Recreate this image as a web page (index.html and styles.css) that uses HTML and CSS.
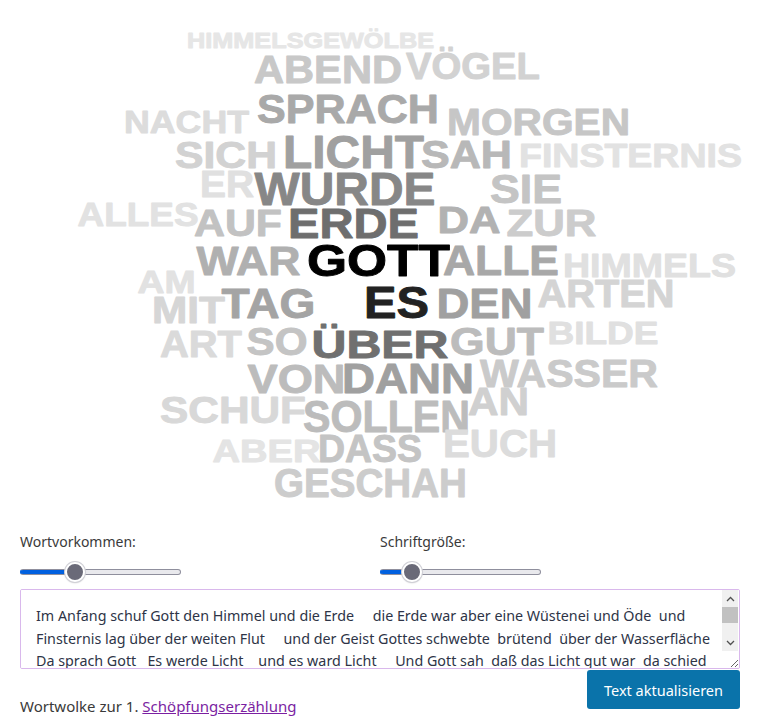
FILE: index.html
```html
<!DOCTYPE html>
<html lang="de">
<head>
<meta charset="utf-8">
<title>Wortwolke</title>
<link rel="stylesheet" href="styles.css">
</head>
<body>
<div class="page">
  <svg class="cloud" width="765" height="532" viewBox="0 0 765 532" xmlns="http://www.w3.org/2000/svg">
    <g class="words">
      <text x="187" y="48" font-size="21.5" textLength="247" lengthAdjust="spacingAndGlyphs" color="#e6e6e6">HIMMELSGEWÖLBE</text>
      <text x="254" y="83" font-size="38" textLength="148" lengthAdjust="spacingAndGlyphs" color="#c8c8c8">ABEND</text>
      <text x="406" y="79" font-size="36" textLength="134" lengthAdjust="spacingAndGlyphs" color="#d2d2d2">VÖGEL</text>
      <text x="124" y="132.5" font-size="32" textLength="125" lengthAdjust="spacingAndGlyphs" color="#dcdcdc">NACHT</text>
      <text x="257" y="123" font-size="41.5" textLength="182" lengthAdjust="spacingAndGlyphs" color="#a9a9a9">SPRACH</text>
      <text x="447" y="134.5" font-size="37" textLength="183" lengthAdjust="spacingAndGlyphs" color="#c6c6c6">MORGEN</text>
      <text x="175" y="168" font-size="36" textLength="102" lengthAdjust="spacingAndGlyphs" color="#d2d2d2">SICH</text>
      <text x="283" y="168" font-size="46" textLength="141" lengthAdjust="spacingAndGlyphs" color="#a0a0a0">LICHT</text>
      <text x="421" y="168" font-size="39" textLength="91" lengthAdjust="spacingAndGlyphs" color="#b8b8b8">SAH</text>
      <text x="519" y="166.5" font-size="33" textLength="223" lengthAdjust="spacingAndGlyphs" color="#e2e2e2">FINSTERNIS</text>
      <text x="200" y="196.7" font-size="36" textLength="54" lengthAdjust="spacingAndGlyphs" color="#e0e0e0">ER</text>
      <text x="254.5" y="205" font-size="47" textLength="181" lengthAdjust="spacingAndGlyphs" color="#878787">WURDE</text>
      <text x="490" y="203" font-size="40" textLength="72" lengthAdjust="spacingAndGlyphs" color="#c4c4c4">SIE</text>
      <text x="77.5" y="226" font-size="33" textLength="121" lengthAdjust="spacingAndGlyphs" color="#e2e2e2">ALLES</text>
      <text x="194" y="236" font-size="37" textLength="88" lengthAdjust="spacingAndGlyphs" color="#c2c2c2">AUF</text>
      <text x="288" y="238" font-size="43" textLength="131" lengthAdjust="spacingAndGlyphs" color="#6e6e6e">ERDE</text>
      <text x="437.5" y="232.5" font-size="37" textLength="63" lengthAdjust="spacingAndGlyphs" color="#b2b2b2">DA</text>
      <text x="506.5" y="236" font-size="37" textLength="90" lengthAdjust="spacingAndGlyphs" color="#cccccc">ZUR</text>
      <text x="196.5" y="275" font-size="40" textLength="104" lengthAdjust="spacingAndGlyphs" color="#b0b0b0">WAR</text>
      <text x="307" y="276" font-size="45" textLength="143" lengthAdjust="spacingAndGlyphs" color="#000000">GOTT</text>
      <text x="443" y="275" font-size="43" textLength="116" lengthAdjust="spacingAndGlyphs" color="#a8a8a8">ALLE</text>
      <text x="563" y="276.5" font-size="33" textLength="173" lengthAdjust="spacingAndGlyphs" color="#e0e0e0">HIMMELS</text>
      <text x="137.5" y="293.3" font-size="31" textLength="58" lengthAdjust="spacingAndGlyphs" color="#e2e2e2">AM</text>
      <text x="152" y="323.3" font-size="36" textLength="73" lengthAdjust="spacingAndGlyphs" color="#d6d6d6">MIT</text>
      <text x="221.5" y="318" font-size="43" textLength="94" lengthAdjust="spacingAndGlyphs" color="#a4a4a4">TAG</text>
      <text x="364" y="318" font-size="44" textLength="65" lengthAdjust="spacingAndGlyphs" color="#222222">ES</text>
      <text x="436.5" y="318.3" font-size="43" textLength="96" lengthAdjust="spacingAndGlyphs" color="#a0a0a0">DEN</text>
      <text x="537.5" y="306.7" font-size="38" textLength="137" lengthAdjust="spacingAndGlyphs" color="#d4d4d4">ARTEN</text>
      <text x="160" y="356.7" font-size="36" textLength="82" lengthAdjust="spacingAndGlyphs" color="#dadada">ART</text>
      <text x="246.5" y="354.5" font-size="39" textLength="61" lengthAdjust="spacingAndGlyphs" color="#c4c4c4">SO</text>
      <text x="311.5" y="358" font-size="38" textLength="137" lengthAdjust="spacingAndGlyphs" color="#707070">ÜBER</text>
      <text x="450" y="354.5" font-size="39" textLength="94" lengthAdjust="spacingAndGlyphs" color="#bcbcbc">GUT</text>
      <text x="547.5" y="344" font-size="32" textLength="111" lengthAdjust="spacingAndGlyphs" color="#e0e0e0">BILDE</text>
      <text x="247.5" y="393" font-size="40" textLength="98" lengthAdjust="spacingAndGlyphs" color="#bcbcbc">VON</text>
      <text x="342" y="393.3" font-size="43" textLength="132" lengthAdjust="spacingAndGlyphs" color="#a0a0a0">DANN</text>
      <text x="480" y="387" font-size="38.5" textLength="178" lengthAdjust="spacingAndGlyphs" color="#cacaca">WASSER</text>
      <text x="160" y="423" font-size="37" textLength="146" lengthAdjust="spacingAndGlyphs" color="#d8d8d8">SCHUF</text>
      <text x="303" y="431.5" font-size="44" textLength="167" lengthAdjust="spacingAndGlyphs" color="#bcbcbc">SOLLEN</text>
      <text x="468" y="415" font-size="38" textLength="61" lengthAdjust="spacingAndGlyphs" color="#d0d0d0">AN</text>
      <text x="212.5" y="461.7" font-size="31" textLength="108" lengthAdjust="spacingAndGlyphs" color="#e4e4e4">ABER</text>
      <text x="318" y="461.5" font-size="38" textLength="104" lengthAdjust="spacingAndGlyphs" color="#c4c4c4">DASS</text>
      <text x="443" y="456.5" font-size="38" textLength="114" lengthAdjust="spacingAndGlyphs" color="#dcdcdc">EUCH</text>
      <text x="274" y="496.5" font-size="40" textLength="193" lengthAdjust="spacingAndGlyphs" color="#cccccc">GESCHAH</text>
    </g>
  </svg>

  <div class="controls">
    <div class="control">
      <label class="control-label" for="freq">Wortvorkommen:</label>
      <input class="slider slider-freq" id="freq" type="range" min="0" max="100" value="32">
    </div>
    <div class="control">
      <label class="control-label" for="size">Schriftgröße:</label>
      <input class="slider slider-size" id="size" type="range" min="0" max="100" value="15">
    </div>
  </div>

  <div class="editor">
    <textarea class="source" spellcheck="false">Im Anfang schuf Gott den Himmel und die Erde     die Erde war aber eine Wüstenei und Öde  und
Finsternis lag über der weiten Flut     und der Geist Gottes schwebte  brütend  über der Wasserfläche
Da sprach Gott   Es werde Licht    und es ward Licht     Und Gott sah  daß das Licht gut war  da schied
Gott zwischen dem Licht und der Finsternis  Und Gott nannte das Licht Tag  und die Finsternis nannte er Nacht  Und es ward Abend  und es ward Morgen  erster Tag  Und Gott sprach  Es werde eine feste Wölbung inmitten der Wasser  die bilde eine Scheide zwischen den Wassern  Und so geschah es</textarea>
    <div class="scrollbar" aria-hidden="true">
      <div class="sb-btn">
        <svg width="9" height="6" viewBox="0 0 9 6"><path d="M1 5l3.5-3.5L8 5" fill="none" stroke="#505050" stroke-width="1.3"/></svg>
      </div>
      <div class="sb-track"><div class="sb-thumb"></div></div>
      <div class="sb-btn">
        <svg width="9" height="6" viewBox="0 0 9 6"><path d="M1 1l3.5 3.5L8 1" fill="none" stroke="#505050" stroke-width="1.3"/></svg>
      </div>
    </div>
  </div>

  <div class="footer">
    <p class="caption">Wortwolke zur 1. <a class="caption-link" href="#">Schöpfungserzählung</a></p>
    <button class="update-btn" type="button">Text aktualisieren</button>
  </div>
</div>
</body>
</html>
```

FILE: styles.css
```css
html, body {
  margin: 0;
  padding: 0;
  background: #ffffff;
}

body {
  font-family: "Noto Sans", "Open Sans", sans-serif;
  color: #3a3a3a;
}

.page {
  width: 765px;
}

.cloud {
  display: block;
}

.cloud text {
  font-family: "Liberation Sans", Arial, sans-serif;
  font-weight: bold;
  fill: currentColor;
  stroke: currentColor;
  stroke-width: 0.9px;
  stroke-linejoin: round;
}

.controls {
  display: grid;
  grid-template-columns: 360px 360px;
  padding: 0 20px;
}

.control {
  display: flex;
  flex-direction: column;
  align-items: flex-start;
}

.control-label {
  font-size: 14px;
  line-height: 20px;
  color: #3a3a3a;
}

.slider {
  -webkit-appearance: none;
  appearance: none;
  width: 161px;
  height: 20px;
  margin: 10px 0 0 0;
  padding: 0;
  background: transparent;
}

.slider::-webkit-slider-runnable-track {
  height: 6px;
  border-radius: 3px;
  border: 1px solid #8f8f9d;
  box-sizing: border-box;
}

.slider-freq::-webkit-slider-runnable-track {
  background: linear-gradient(to right, #0060df 0, #0060df 52px, #e9e9ed 52px);
  border-left-color: #0060df;
}

.slider-size::-webkit-slider-runnable-track {
  background: linear-gradient(to right, #0060df 0, #0060df 26px, #e9e9ed 26px);
  border-left-color: #0060df;
}

.slider::-webkit-slider-thumb {
  -webkit-appearance: none;
  appearance: none;
  width: 20px;
  height: 20px;
  margin-top: -8px;
  border-radius: 50%;
  background: #6a6a78;
  border: 2px solid #ffffff;
  box-shadow: 0 0 0 1px #d0d0d6, 0 1px 2px rgba(0,0,0,0.2);
  box-sizing: border-box;
}

.editor {
  position: relative;
  width: 720px;
  margin: 7px 20px 0 20px;
}

.source {
  display: block;
  box-sizing: border-box;
  width: 720px;
  height: 80px;
  margin: 0;
  padding: 15px 2px 0 15px;
  border: 1px solid #d9b8ec;
  border-radius: 2px;
  font-family: "Noto Sans", "Open Sans", sans-serif;
  font-size: 14.3px;
  line-height: 22.7px;
  color: #2e3447;
  resize: vertical;
  overflow-y: scroll;
}

.scrollbar {
  position: absolute;
  top: 1px;
  right: 2px;
  width: 16px;
  height: 61px;
  display: flex;
  flex-direction: column;
  background: #f0f0f0;
}

.sb-btn {
  height: 17px;
  display: flex;
  align-items: center;
  justify-content: center;
  flex: none;
}

.sb-btn svg {
  display: block;
}

.sb-track {
  flex: 1;
  display: flex;
  flex-direction: column;
}

.sb-thumb {
  height: 16px;
  background: #c1c1c1;
}

.footer {
  display: flex;
  justify-content: space-between;
  align-items: flex-start;
  padding: 0 25px 0 20px;
  margin-top: 1px;
}

.caption {
  margin: 26px 0 0 0;
  font-size: 15px;
  line-height: 20px;
  color: #3a3a3a;
}

.caption-link {
  color: #7b1fa2;
  text-decoration: underline;
}

.update-btn {
  width: 153px;
  height: 39px;
  background: #0a73aa;
  color: #ffffff;
  border: none;
  border-radius: 3px;
  font-family: "Noto Sans", "Open Sans", sans-serif;
  font-size: 14.5px;
  padding: 0;
}
```
